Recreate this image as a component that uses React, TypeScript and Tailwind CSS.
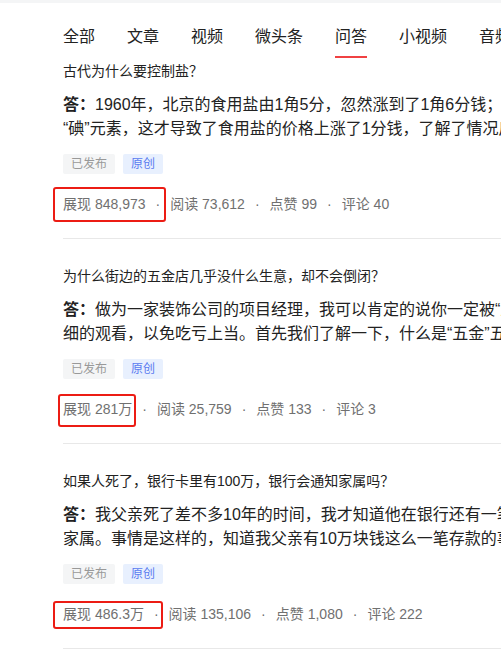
const tabs = ["全部", "文章", "视频", "微头条", "问答", "小视频", "音频"]

// 问答列表
const items = [
  {
    title: "古代为什么要控制盐？",
    lines: [
      "1960年，北京的食用盐由1角5分，忽然涨到了1角6分钱；原来是盐里加了",
      "“碘”元素，这才导致了食用盐的价格上涨了1分钱，了解了情况后大家也就",
    ],
    stats: ["展现 848,973", "阅读 73,612", "点赞 99", "评论 40"],
    box: "-left-[10px] -top-[7px] w-[113px] h-[35px]",
  },
  {
    title: "为什么街边的五金店几乎没什么生意，却不会倒闭？",
    lines: [
      "做为一家装饰公司的项目经理，我可以肯定的说你一定被“五金店”的表面骗了，",
      "细的观看，以免吃亏上当。首先我们了解一下，什么是“五金”五金是指",
    ],
    stats: ["展现 281万", "阅读 25,759", "点赞 133", "评论 3"],
    box: "-left-[5px] -top-[5px] w-[78px] h-[33px]",
  },
  {
    title: "如果人死了，银行卡里有100万，银行会通知家属吗？",
    lines: [
      "我父亲死了差不多10年的时间，我才知道他在银行还有一笔存款，",
      "家属。事情是这样的，知道我父亲有10万块钱这么一笔存款的事情",
    ],
    stats: ["展现 486.3万", "阅读 135,106", "点赞 1,080", "评论 222"],
    box: "-left-[10px] -top-[3px] w-[110px] h-[28px]",
  },
]

export default function App() {
  return (
    <div className="min-h-screen w-full overflow-hidden bg-white font-['Liberation_Sans','Noto_Sans_CJK_SC',sans-serif] text-[#222]">
      <div className="h-[3px] bg-[#f4f5f6]" />
      <div className="pl-[63px]">
        {/* 频道 */}
        <nav className="flex gap-8 whitespace-nowrap pt-[23px]">
          {tabs.map((tab) => (
            <div key={tab} className="flex flex-col items-stretch">
              <span className="text-[16px] leading-[22px]">{tab}</span>
              <span className={`mt-2 h-[2px] ${tab === "问答" ? "bg-[#f04142]" : "bg-transparent"}`} />
            </div>
          ))}
        </nav>

        {items.map((item, index) => (
          <div key={index} className={index === 0 ? "pt-[3px]" : "pt-[27px]"}>
            <div className="whitespace-nowrap text-[14px] leading-[20px]">{item.title}</div>
            <div className="mt-3 whitespace-nowrap text-[16px] leading-[24px]">
              <div>
                <span className="font-bold">答：</span>
                {item.lines[0]}
              </div>
              <div>{item.lines[1]}</div>
            </div>
            <div className="mt-[13px] flex gap-2 text-[12px] leading-[20px]">
              <span className="rounded-[2px] bg-[#f4f5f6] px-2 text-[#999]">已发布</span>
              <span className="rounded-[2px] bg-[#e8f0fe] px-2 text-[#5a7bf0]">原创</span>
            </div>
            <div className="relative mt-5 flex items-center whitespace-nowrap text-[14px] leading-[20px] text-[#707070]">
              {item.stats.map((s, i) => (
                <span key={i} className="flex items-center">
                  {i > 0 && <span className="mx-[10px]">·</span>}
                  {s}
                </span>
              ))}
              <span className={`absolute rounded-[3px] border-2 border-[#ec1c14] ${item.box}`} />
            </div>
            <div className="mt-6 h-px bg-[#e8e8e8]" />
          </div>
        ))}
      </div>
    </div>
  )
}
